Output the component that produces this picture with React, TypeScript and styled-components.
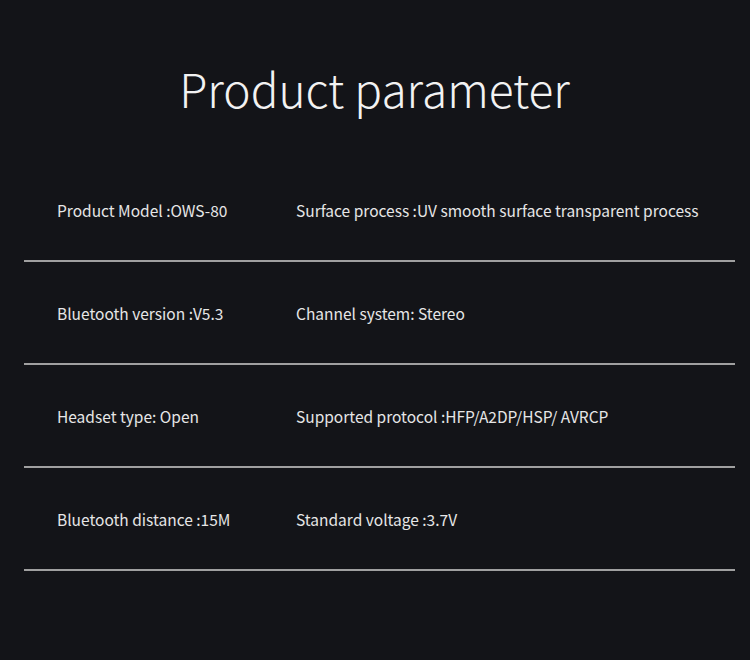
import React from 'react';
import styled, { createGlobalStyle } from 'styled-components';

const GlobalStyle = createGlobalStyle`
  html, body {
    margin: 0;
    padding: 0;
    background: #131418;
  }
`;

const Page = styled.div`
  box-sizing: border-box;
  width: 750px;
  height: 660px;
  padding: 58px 15px 0 24px;
  background: #131418;
  font-family: 'Noto Sans CJK SC', 'Noto Sans', sans-serif;
  overflow: hidden;
`;

const Title = styled.h1`
  margin: 0 0 41px;
  padding-right: 10px;
  height: 60px;
  line-height: 60px;
  font-size: 46px;
  font-weight: 300;
  color: #f2f2f2;
  text-align: center;
`;

const List = styled.div`
  display: flex;
  flex-direction: column;
`;

const Row = styled.div`
  display: grid;
  grid-template-columns: 239px 1fr;
  padding: 41px 0 40px 33px;
  border-bottom: 2px solid #a0a0a0;
`;

const Cell = styled.div`
  font-size: 15.5px;
  line-height: 20px;
  color: #e6e6e6;
  white-space: nowrap;
`;

interface IParam {
  left: string;
  right: string;
}

const params: IParam[] = [
  { left: 'Product Model :OWS-80', right: 'Surface process :UV smooth surface transparent process' },
  { left: 'Bluetooth version :V5.3', right: 'Channel system: Stereo' },
  { left: 'Headset type: Open', right: 'Supported protocol :HFP/A2DP/HSP/ AVRCP' },
  { left: 'Bluetooth distance :15M', right: 'Standard voltage :3.7V' },
];

export default function App() {
  return (
    <>
      <GlobalStyle />
      <Page>
        <Title>Product parameter</Title>
        <List>
          {params.map((p, i) => (
            <Row key={i}>
              <Cell>{p.left}</Cell>
              <Cell>{p.right}</Cell>
            </Row>
          ))}
        </List>
      </Page>
    </>
  );
}
